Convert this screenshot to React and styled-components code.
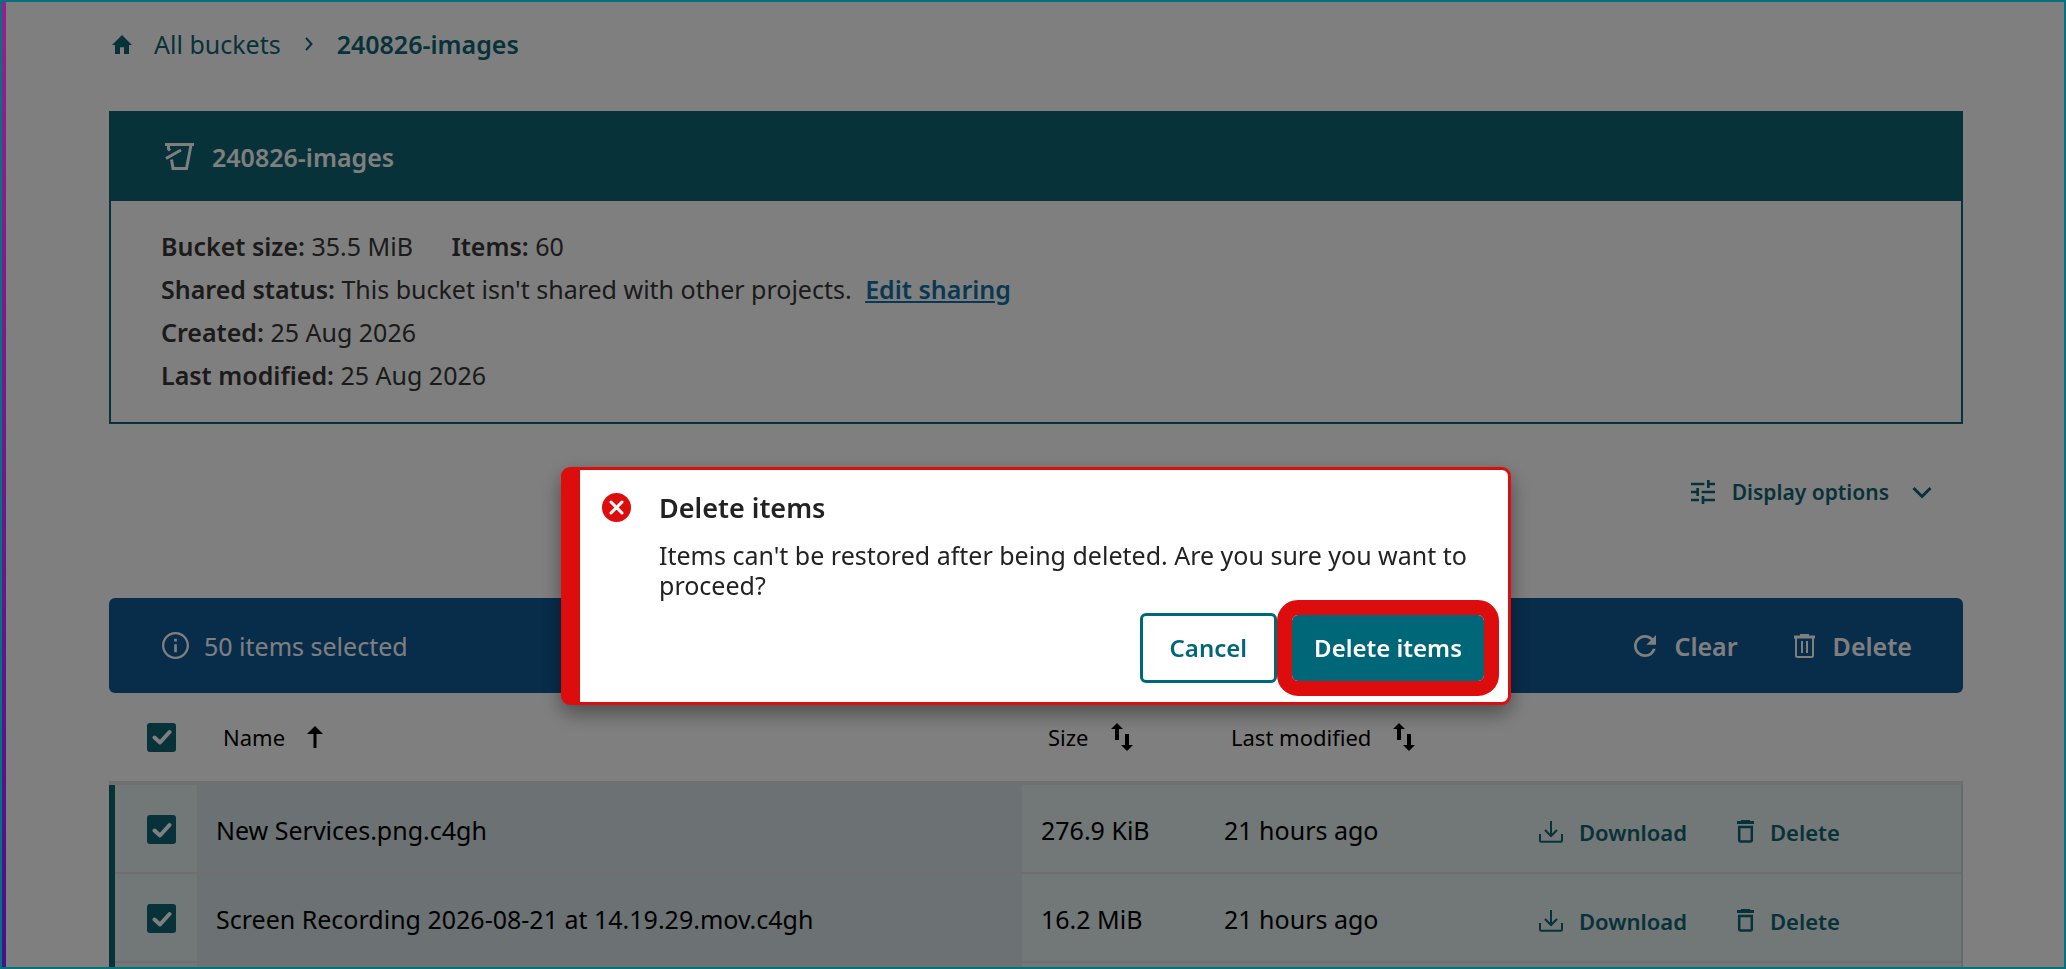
import styled, { createGlobalStyle } from "styled-components";

const rows = [
  { name: "New Services.png.c4gh", size: "276.9 KiB", modified: "21 hours ago" },
  { name: "Screen Recording 2026-08-21 at 14.19.29.mov.c4gh", size: "16.2 MiB", modified: "21 hours ago" },
];

const HomeIcon = () => (
  <svg width="20" height="19" viewBox="2 3 20 17" preserveAspectRatio="none" fill="currentColor" aria-hidden="true">
    <path d="M10 20V14H14V20H19V12H22L12 3L2 12H5V20H10Z" />
  </svg>
);

const CrumbArrow = () => (
  <svg width="8" height="14" viewBox="0 0 8 14" fill="none" stroke="currentColor" strokeWidth="2" aria-hidden="true">
    <path d="M1 1L6.500 7L1 13" />
  </svg>
);

const PailIcon = () => (
  <svg width="29" height="28" viewBox="0 0 29 28" fill="none" stroke="currentColor" strokeWidth="3" aria-hidden="true">
    <path d="M0 1.500H29M26 2L21.500 25.500H8L6.500 16.500M3.500 2V6L5 7.500M1 15.500L16 7" />
  </svg>
);

const TuneIcon = () => (
  <svg width="24" height="24" viewBox="3 3 18 18" fill="currentColor" aria-hidden="true">
    <path d="M3 17v2h6v-2H3zM3 5v2h10V5H3zm10 16v-2h8v-2h-8v-2h-2v6h2zM7 9v2H3v2h4v2h2V9H7zm14 4v-2H11v2h10zm-6-4h2V7h4V5h-4V3h-2v6z" />
  </svg>
);

const ChevronDown = () => (
  <svg width="20" height="13" viewBox="0 0 20 13" fill="none" stroke="currentColor" strokeWidth="3" aria-hidden="true">
    <path d="M1.500 2L10 10.500L18.500 2" />
  </svg>
);

const InfoIcon = () => (
  <svg width="27" height="27" viewBox="2 2 20 20" fill="currentColor" aria-hidden="true">
    <path d="M11 7h2v2h-2zm0 4h2v6h-2zm1-9C6.480 2 2 6.480 2 12s4.480 10 10 10 10-4.480 10-10S17.520 2 12 2zm0 18.300c-4.580 0-8.300-3.720-8.300-8.300S7.420 3.700 12 3.700s8.300 3.720 8.300 8.300-3.720 8.300-8.300 8.300z" />
  </svg>
);

const RefreshIcon = () => (
  <svg width="22" height="22" viewBox="4 4 16 16" fill="currentColor" aria-hidden="true">
    <path d="M17.650 6.350A7.958 7.958 0 0 0 12 4c-4.420 0-7.990 3.580-7.990 8s3.570 8 7.990 8c3.730 0 6.840-2.550 7.730-6h-2.080A5.990 5.990 0 0 1 12 18c-3.310 0-6-2.690-6-6s2.690-6 6-6c1.660 0 3.140.690 4.220 1.780L13 11h7V4l-2.350 2.350z" />
  </svg>
);

const BarTrashIcon = () => (
  <svg width="21" height="24" viewBox="0 0 21 24" fill="none" stroke="currentColor" strokeWidth="2" aria-hidden="true">
    <path d="M0 3H21" strokeWidth="3" />
    <path d="M6 1H15M2 3V21.500Q2 23 3.500 23H17.500Q19 23 19 21.500V3M8 7V19M13 7V19" />
  </svg>
);

const RowTrashIcon = () => (
  <svg width="17" height="23" viewBox="0 0 17 23" fill="none" stroke="currentColor" aria-hidden="true">
    <path d="M0 2.500H17M4 1.500H13" strokeWidth="3" />
    <path d="M2.200 7H14.800V20Q14.800 21.500 13.300 21.500H3.700Q2.200 21.500 2.200 20Z" strokeWidth="2.500" />
  </svg>
);

const DownloadIcon = () => (
  <svg width="24" height="22" viewBox="0 0 24 22" fill="none" stroke="currentColor" strokeWidth="2" aria-hidden="true">
    <path d="M12 0V15M6 9L12 15L18 9M1 13V19.500Q1 20.700 2.200 20.700H21.800Q23 20.700 23 19.500V13" />
  </svg>
);

const ArrowUp = () => (
  <svg width="16" height="22" viewBox="0 0 16 22" fill="currentColor" aria-hidden="true">
    <path d="M8 0L16 8H9.500V22H6.500V8H0Z" />
  </svg>
);

const SortIcon = () => (
  <svg width="22" height="28" viewBox="0 0 22 28" fill="currentColor" aria-hidden="true">
    <path d="M6 0L12 6H8V17H4V6H0ZM14 11H18V22H22L16 28L10 22H14Z" />
  </svg>
);

const ErrorIcon = () => (
  <svg width="29" height="29" viewBox="0 0 29 29" aria-hidden="true">
    <circle cx="14.500" cy="14.500" r="14.500" fill="#de0d0d" />
    <path d="M9 9L20 20M20 9L9 20" stroke="#fff" strokeWidth="3" strokeLinecap="round" />
  </svg>
);

const Checkbox = ({ label }) => (
  <CheckLabel>
    <input type="checkbox" defaultChecked aria-label={label} />
    <svg width="20" height="16" viewBox="0 0 20 16" fill="none" aria-hidden="true">
      <path d="M2.500 8.500L8 13.500L17.500 3" stroke="#fff" strokeWidth="4" strokeLinecap="round" strokeLinejoin="round" />
    </svg>
  </CheckLabel>
);

const App = () => {
  return (
    <>
      <GlobalStyle />
      <Page>
        <Breadcrumb aria-label="Breadcrumb">
          <a href="#buckets"><HomeIcon /> All buckets</a>
          <CrumbArrow />
          <a href="#bucket" aria-current="page">240826-images</a>
        </Breadcrumb>

        <Bucket>
          <BucketHeader>
            <PailIcon />
            <h1>240826-images</h1>
          </BucketHeader>
          <BucketInfo>
            <li><b>Bucket size:</b> 35.5 MiB <Items><b>Items:</b> 60</Items></li>
            <li><b>Shared status:</b> This bucket isn't shared with other projects. <a href="#share">Edit sharing</a></li>
            <li><b>Created:</b> 25 Aug 2026</li>
            <li><b>Last modified:</b> 25 Aug 2026</li>
          </BucketInfo>
        </Bucket>

        <Options>
          <OptionsButton type="button"><TuneIcon /> Display options <ChevronDown /></OptionsButton>
        </Options>

        <SelectionBar>
          <Selected><InfoIcon /> 50 items selected</Selected>
          <BarButton type="button"><RefreshIcon /> Clear</BarButton>
          <BarButton type="button"><BarTrashIcon /> Delete</BarButton>
        </SelectionBar>

        <Table>
          <colgroup>
            <Col $w={88} />
            <col />
            <Col $w={183} />
            <Col $w={315} />
            <Col $w={443} />
          </colgroup>
          <thead>
            <tr>
              <th><Checkbox label="Select all" /></th>
              <th><SortButton type="button">Name <ArrowUp /></SortButton></th>
              <th><SortButton type="button">Size <SortIcon /></SortButton></th>
              <th><SortButton type="button">Last modified <SortIcon /></SortButton></th>
              <th></th>
            </tr>
          </thead>
          <tbody>
            {rows.map((row) => (
              <tr key={row.name}>
                <td><Checkbox label={row.name} /></td>
                <NameCell>{row.name}</NameCell>
                <td>{row.size}</td>
                <td>{row.modified}</td>
                <td>
                  <RowActions>
                    <RowButton type="button"><DownloadIcon /> Download</RowButton>
                    <RowButton type="button"><RowTrashIcon /> Delete</RowButton>
                  </RowActions>
                </td>
              </tr>
            ))}
            <tr aria-hidden="true">
              <td />
              <NameCell />
              <td />
              <td />
              <td />
            </tr>
          </tbody>
        </Table>
      </Page>

      <Overlay>
        <Dialog role="alertdialog" aria-labelledby="dialog-title">
          <ErrorIcon />
          <DialogBody>
            <h2 id="dialog-title">Delete items</h2>
            <p>Items can't be restored after being deleted. Are you sure you want to proceed?</p>
          </DialogBody>
          <DialogActions>
            <CancelButton type="button">Cancel</CancelButton>
            <ConfirmButton type="button">Delete items</ConfirmButton>
          </DialogActions>
        </Dialog>
      </Overlay>
      <Frame />
    </>
  );
};

const GlobalStyle = createGlobalStyle`
  * {
    box-sizing: border-box;
  }
  body {
    margin: 0;
    background: #fff;
    color: #363636;
    font-family: "Noto Sans", sans-serif;
    font-size: 25px;
  }
  #root {
    height: 100vh;
    overflow: hidden;
  }
  b {
    font-weight: 600;
  }
  button {
    display: flex;
    align-items: center;
    border: none;
    background: none;
    padding: 0;
    font: inherit;
    color: inherit;
    white-space: nowrap;
    cursor: pointer;
  }
  svg {
    display: block;
    flex-shrink: 0;
  }
`;

const Page = styled.main`
  height: 100%;
  overflow: hidden;
  padding: 23px 103px 0 109px;
`;

const Breadcrumb = styled.nav`
  display: flex;
  align-items: center;
  gap: 24px;
  height: 42px;
  margin-bottom: 46px;
  padding-left: 3px;
  color: #0f6472;
  a {
    display: flex;
    align-items: center;
    gap: 22px;
    color: inherit;
    text-decoration: none;
  }
  a[aria-current] {
    font-weight: 600;
  }
`;

const Bucket = styled.section`
  border: 2px solid #0f6472;
`;

const BucketHeader = styled.header`
  display: flex;
  align-items: center;
  gap: 18px;
  height: 88px;
  padding-left: 54px;
  background: #0f6472;
  color: #fff;
  h1 {
    margin: 0;
    font-size: 25px;
    font-weight: 600;
  }
`;

const BucketInfo = styled.ul`
  list-style: none;
  margin: 0;
  padding: 24px 50px 25px;
  line-height: 43px;
  a {
    margin-left: 7px;
    color: #1270a8;
    font-weight: 600;
  }
`;

const Items = styled.span`
  margin-left: 32px;
`;

const Options = styled.div`
  display: flex;
  justify-content: flex-end;
  padding: 47px 31px 85px;
`;

const OptionsButton = styled.button`
  && {
    gap: 17px;
    height: 42px;
    color: #0f6472;
    font-size: 21px;
    font-weight: 600;
  }
  svg:last-child {
    margin-left: 6px;
  }
`;

const SelectionBar = styled.div`
  display: flex;
  align-items: center;
  gap: 56px;
  height: 95px;
  padding: 0 51px 0 53px;
  border-radius: 6px;
  background: #105a96;
  color: #fff;
`;

const Selected = styled.div`
  display: flex;
  align-items: center;
  gap: 15px;
  margin-right: auto;
`;

const BarButton = styled.button`
  && {
    gap: 18px;
    font-weight: 600;
  }
`;

const Table = styled.table`
  width: 100%;
  table-layout: fixed;
  border-collapse: separate;
  border-spacing: 0;
  color: #000;
  th {
    height: 92px;
    padding: 0 0 0 26px;
    border-bottom: 4px solid #e0e0e0;
    text-align: left;
    font-size: 22px;
    font-weight: normal;
  }
  th:first-child,
  td:first-child {
    padding-left: 38px;
  }
  td {
    height: 89px;
    padding: 0 0 0 19px;
    background: #e4eeee;
    box-shadow: inset 0 -2px #e0dce0;
  }
  td:first-child {
    box-shadow: inset 6px 0 #0f6472, inset 0 -2px #e0dce0;
  }
  td:last-child {
    box-shadow: inset -2px 0 #ced6d6, inset 0 -2px #e0dce0;
  }
`;

const Col = styled.col`
  width: ${({ $w }) => $w}px;
`;

const NameCell = styled.td`
  && {
    background: #d8e2e6;
  }
`;

const SortButton = styled.button`
  gap: 22px;
`;

const CheckLabel = styled.label`
  display: grid;
  width: 29px;
  height: 29px;
  place-items: center;
  > * {
    grid-area: 1 / 1;
  }
  input {
    appearance: none;
    width: 29px;
    height: 29px;
    margin: 0;
    border-radius: 3px;
    background: #0f6472;
  }
  svg {
    pointer-events: none;
  }
`;

const RowActions = styled.div`
  display: flex;
  align-items: center;
  gap: 50px;
  padding-top: 4px;
  color: #0f6472;
`;

const RowButton = styled.button`
  && {
    gap: 16px;
    font-size: 22px;
    font-weight: 600;
  }
`;

const Overlay = styled.div`
  position: fixed;
  inset: 0;
  display: flex;
  justify-content: center;
  align-items: flex-start;
  padding: 467px 0 0 6px;
  background: rgba(0, 0, 0, 0.5);
`;

const Dialog = styled.section`
  display: grid;
  grid-template-columns: 29px 1fr;
  column-gap: 28px;
  width: 950px;
  padding: 23px 24px 19px 22px;
  border: 3px solid #de0d0d;
  border-left-width: 19px;
  border-radius: 9px;
  background: #fff;
  box-shadow: 0 8px 20px rgba(0, 0, 0, 0.4);
`;

const DialogBody = styled.div`
  color: #222;
  h2 {
    margin: 0 0 17px;
    font-size: 27px;
    font-weight: 600;
    line-height: 30px;
  }
  p {
    margin: 0;
    line-height: 30px;
  }
`;

const DialogActions = styled.div`
  grid-column: 1 / -1;
  display: flex;
  justify-content: flex-end;
  align-items: center;
  gap: 15px;
  padding-top: 13px;
`;

const CancelButton = styled.button`
  && {
    height: 70px;
    padding: 0 27px 2px;
    border: 3px solid #006778;
    border-radius: 6px;
    color: #006778;
    font-size: 24px;
    font-weight: 600;
  }
`;

const ConfirmButton = styled.button`
  && {
    height: 66px;
    padding: 0 22px 2px;
    border-radius: 6px;
    outline: 15px solid #de0d0d;
    background: #006778;
    color: #fff;
    font-size: 24px;
    font-weight: 600;
  }
`;

const Frame = styled.div`
  position: fixed;
  inset: 0;
  border: 2px solid #067080;
  pointer-events: none;
  &::before {
    content: "";
    display: block;
    width: 4px;
    height: 100%;
    background: linear-gradient(#96208c, #46108c);
  }
`;

export default App;
